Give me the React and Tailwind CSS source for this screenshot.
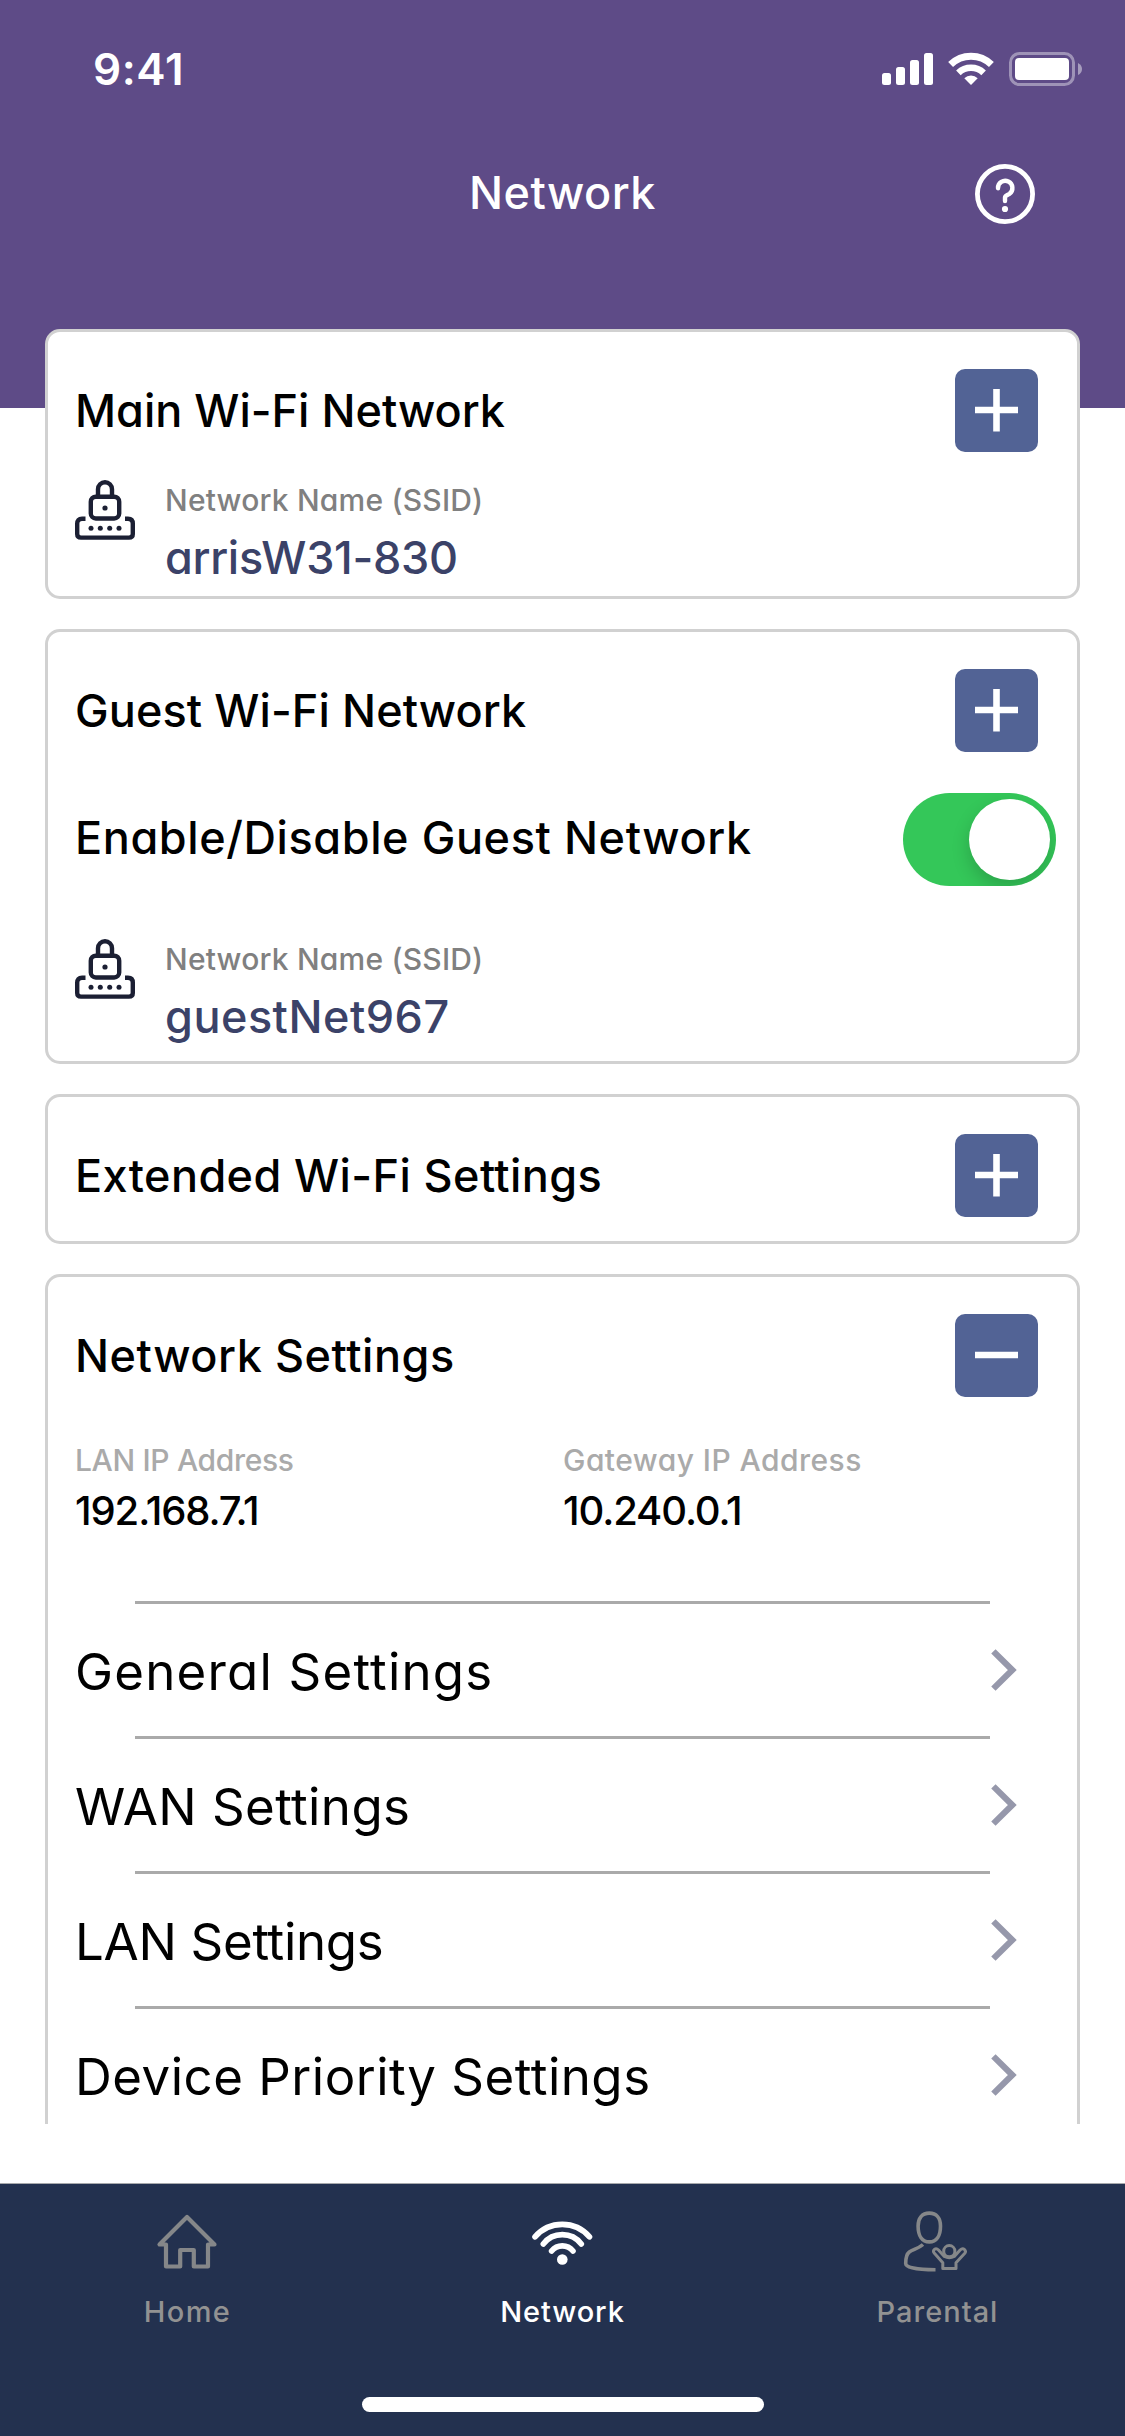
import React from "react";

function StatusIcons() {
  return (
    <svg width="200" height="34" viewBox="0 0 200 34" fill="white">
      <rect x="0" y="21" width="9" height="12" rx="2.5" />
      <rect x="14" y="15" width="9" height="18" rx="2.5" />
      <rect x="28" y="8" width="9" height="25" rx="2.5" />
      <rect x="42" y="1" width="9" height="32" rx="2.5" />
      <g fill="none" stroke="white">
        <path d="M68.6 12.6 A29.3 29.3 0 0 1 109.4 12.6" strokeWidth="7" />
        <path d="M76.4 20.8 A18.2 18.2 0 0 1 101.6 20.8" strokeWidth="6.6" />
      </g>
      <path d="M89 33 L82.3 26.2 A9.6 9.6 0 0 1 95.7 26.2 Z" />
      <rect x="128.5" y="1.5" width="63" height="31" rx="9" fill="none" stroke="white" strokeOpacity="0.4" strokeWidth="3" />
      <rect x="133" y="6" width="54" height="22" rx="4" />
      <path d="M196 11 Q200 13 200 17 Q200 21 196 23 Z" fillOpacity="0.45" />
    </svg>
  );
}

function HelpIcon() {
  return (
    <svg width="60" height="60" viewBox="0 0 60 60" fill="none" stroke="white" strokeLinecap="round" strokeLinejoin="round">
      <circle cx="30" cy="30" r="27.6" strokeWidth="4.8" />
      <path d="M23 24.2 A7.2 7.2 0 1 1 34.5 29.8 C31.5 31.6 30 31.6 30 33.5 V37" strokeWidth="4.4" />
      <circle cx="30" cy="45" r="3.1" fill="white" stroke="none" />
    </svg>
  );
}

function LockIcon() {
  return (
    <svg className="mt-[3px] shrink-0" width="60" height="60" viewBox="0 0 60 60" fill="none" stroke="#1b1f33" strokeWidth="4.4" strokeLinecap="butt">
      <path d="M23 16.5 V9.2 A7 7 0 0 1 37 9.2 V16.5" />
      <rect x="15.8" y="16.7" width="28.4" height="21.8" rx="5" />
      <path d="M10.5 38.8 H7 Q2.2 38.8 2.2 43.8 V54 Q2.2 57.6 6 57.6 H54 Q57.8 57.6 57.8 54 V43.8 Q57.8 38.8 53 38.8 H50" />
      <g fill="#1b1f33" stroke="none">
        <circle cx="30" cy="28" r="2.6" />
        <circle cx="16" cy="48.2" r="2.5" />
        <circle cx="25.3" cy="48.2" r="2.5" />
        <circle cx="34.7" cy="48.2" r="2.5" />
        <circle cx="44" cy="48.2" r="2.5" />
      </g>
    </svg>
  );
}

function Chevron() {
  return (
    <svg className="mr-[60px]" width="26" height="42" viewBox="0 0 26 42" fill="none" stroke="#9698ab" strokeWidth="6.2">
      <path d="M2.4 2.4 L21.3 21 L2.4 39.6" />
    </svg>
  );
}

function ExpandButton({ open }) {
  return (
    <button className="mr-[39px] flex size-[83px] items-center justify-center rounded-[10px] bg-[#526395]">
      <svg width="43" height="43" viewBox="0 0 43 43" stroke="white" strokeWidth="6.6">
        <path d="M0 21 H43" />
        {!open && <path d="M21.5 0 V42.5" />}
      </svg>
    </button>
  );
}

function Card({ title, titleClass, open, className, children }) {
  return (
    <section className={`shrink-0 rounded-[15px] border-[3px] border-[#d1d1d1] bg-white pl-[27px] pt-[37px] ${className}`}>
      <div className="flex h-[83px] items-center justify-between">
        <h2 className={`text-[45px] leading-[60px] font-medium ${titleClass}`}>{title}</h2>
        <ExpandButton open={open} />
      </div>
      {children}
    </section>
  );
}

function Ssid({ name, nameClass, className }) {
  return (
    <div className={`flex ${className}`}>
      <LockIcon />
      <div className="ml-[30px] flex flex-col gap-[5px] font-medium">
        <span className="text-[30px] leading-[46px] tracking-[0.2px] text-[#808080]">Network Name (SSID)</span>
        <span className={`text-[45px] leading-[59px] text-[#3b4268] ${nameClass}`}>{name}</span>
      </div>
    </div>
  );
}

function Address({ label, labelClass, value, className }) {
  return (
    <div className={`flex flex-col gap-1.5 font-medium ${className}`}>
      <span className={`text-[30px] leading-10 text-[#aaaaaa] ${labelClass}`}>{label}</span>
      <span className="text-[40px] leading-[50px] tracking-[-1.1px]">{value}</span>
    </div>
  );
}

function SettingRow({ label, className }) {
  return (
    <>
      <hr className="mr-[87px] ml-[60px] h-[3px] border-0 bg-[#aaaaaa]" />
      <div className="flex h-[132px] items-center justify-between">
        <span className={`pt-[3px] text-[51px] leading-[64px] ${className}`}>{label}</span>
        <Chevron />
      </div>
    </>
  );
}

function HomeIcon() {
  return (
    <svg width="64" height="64" viewBox="0 0 64 64" fill="none" stroke="#858789" strokeWidth="4.2" strokeLinejoin="round">
      <path d="M31 7 L3.5 34.500 H10 V56.5 H24.2 V40 H37.8 V56.5 H52 V34.500 H58.500 Z" />
    </svg>
  );
}

function WifiIcon() {
  return (
    <svg width="64" height="64" viewBox="0 0 64 64" fill="none" stroke="white" strokeWidth="5.6" strokeLinecap="round">
      <path d="M4 26.8 A36 36 0 0 1 58.500 26.8" />
      <path d="M12.300 34 A24 24 0 0 1 50.300 34" />
      <path d="M20.600 41 A13.8 13.8 0 0 1 42 41" />
      <circle cx="31.3" cy="49.5" r="5.3" fill="white" stroke="none" />
    </svg>
  );
}

function ParentalIcon() {
  return (
    <svg className="overflow-visible" width="64" height="64" viewBox="0.5 0.5 64 64" fill="none" stroke="#858789" strokeWidth="3.6" strokeLinejoin="round">
      <path d="M23.8 3.6 C31 3.6 35 8.5 35 16.5 C35 26.5 31 32.4 23.8 32.4 C16.6 32.4 12.6 26.5 12.6 16.5 C12.6 8.5 16.6 3.6 23.8 3.6 Z" />
      <path d="M17.5 35 C13 39 7.500 40 3.800 42.5 C0.5 45 0.2 49 0.2 54 C0.2 58 11 60.200 30 60.200" />
      <circle cx="43.8" cy="41.7" r="5.6" strokeWidth="3" />
      <path d="M33 40.500 L38.800 47 Q43.800 49.500 48.800 47 L54.600 40.500 Q57 38.200 59 40 Q60.800 42 59.300 43.800 L50.500 53.300 V59 H37.300 V53.300 L28.700 43.500 Q27 41.500 29 39.800 Q31 38.500 33 40.500 Z" strokeWidth="3" />
    </svg>
  );
}

function Tab({ icon, label, className }) {
  return (
    <div className={`flex flex-1 flex-col items-center gap-[18px] font-medium ${className}`}>
      {icon}
      <span className="text-[29px] leading-10">{label}</span>
    </div>
  );
}

export default function App() {
  return (
    <div className="flex h-[2436px] w-[1125px] flex-col overflow-hidden bg-white font-['Inter',sans-serif] text-black">
      <header className="h-[408px] shrink-0 bg-[#5e4b87] text-white">
        <div className="flex h-[138px] items-center justify-between pr-[43px] pl-[93px]">
          <span className="text-[44px] leading-none font-semibold tracking-[0.6px]">9:41</span>
          <StatusIcons />
        </div>
        <div className="flex h-[112px] items-center pr-[90px] pl-[150px]">
          <h1 className="flex-1 pb-[3px] text-center text-[45px] leading-none font-medium tracking-[0.5px]">Network</h1>
          <HelpIcon />
        </div>
      </header>

      <main className="relative -mt-[79px] flex h-[1795px] shrink-0 flex-col gap-[30px] overflow-hidden px-[45px] [font-feature-settings:'cv11']">
        <Card title="Main Wi-Fi Network" titleClass="tracking-[0px]" className="h-[270px]">
          <Ssid name="arrisW31-830" nameClass="tracking-[-0.3px]" className="mt-[25px]" />
        </Card>

        <Card title="Guest Wi-Fi Network" titleClass="tracking-[0.1px]" className="h-[435px]">
          <div className="mt-[41px] flex h-[93px] items-center justify-between">
            <span className="pb-[3px] text-[45px] leading-[60px] font-medium tracking-[0.6px]">Enable/Disable Guest Network</span>
            <div className="mr-[21px] flex h-[93px] w-[153px] items-center justify-end overflow-hidden rounded-full bg-[#34c759] p-1.5">
              <div className="size-[81px] rounded-full bg-white shadow-[0_8px_18px_rgba(0,0,0,0.18)]" />
            </div>
          </div>
          <Ssid name="guestNet967" nameClass="tracking-[0.5px]" className="mt-[50px]" />
        </Card>

        <Card title="Extended Wi-Fi Settings" titleClass="tracking-[0.4px]" className="h-[150px]" />

        <Card title="Network Settings" titleClass="tracking-[0.55px]" open className="h-[1000px]">
          <div className="mt-[43px] mb-[65px] flex">
            <Address className="w-[488px]" label="LAN IP Address" labelClass="tracking-[-0.35px]" value="192.168.7.1" />
            <Address label="Gateway IP Address" labelClass="tracking-[0.45px]" value="10.240.0.1" />
          </div>
          <SettingRow label="General Settings" className="tracking-[1.2px]" />
          <SettingRow label="WAN Settings" className="tracking-[0.4px]" />
          <SettingRow label="LAN Settings" className="tracking-[-0.3px]" />
          <SettingRow label="Device Priority Settings" className="tracking-[0.5px]" />
        </Card>
      </main>

      <nav className="mt-[59px] flex h-[253px] shrink-0 flex-col border-t border-[#a7a9ac] bg-[#23314f] pt-[26px]">
        <div className="flex">
          <Tab icon={<HomeIcon />} label="Home" className="tracking-[1.4px] text-[#929292]" />
          <Tab icon={<WifiIcon />} label="Network" className="tracking-[0.9px] text-white" />
          <Tab icon={<ParentalIcon />} label="Parental" className="tracking-[1px] text-[#929292]" />
        </div>
        <div className="mx-auto mt-[65px] h-[15px] w-[402px] rounded-full bg-white" />
      </nav>
    </div>
  );
}
